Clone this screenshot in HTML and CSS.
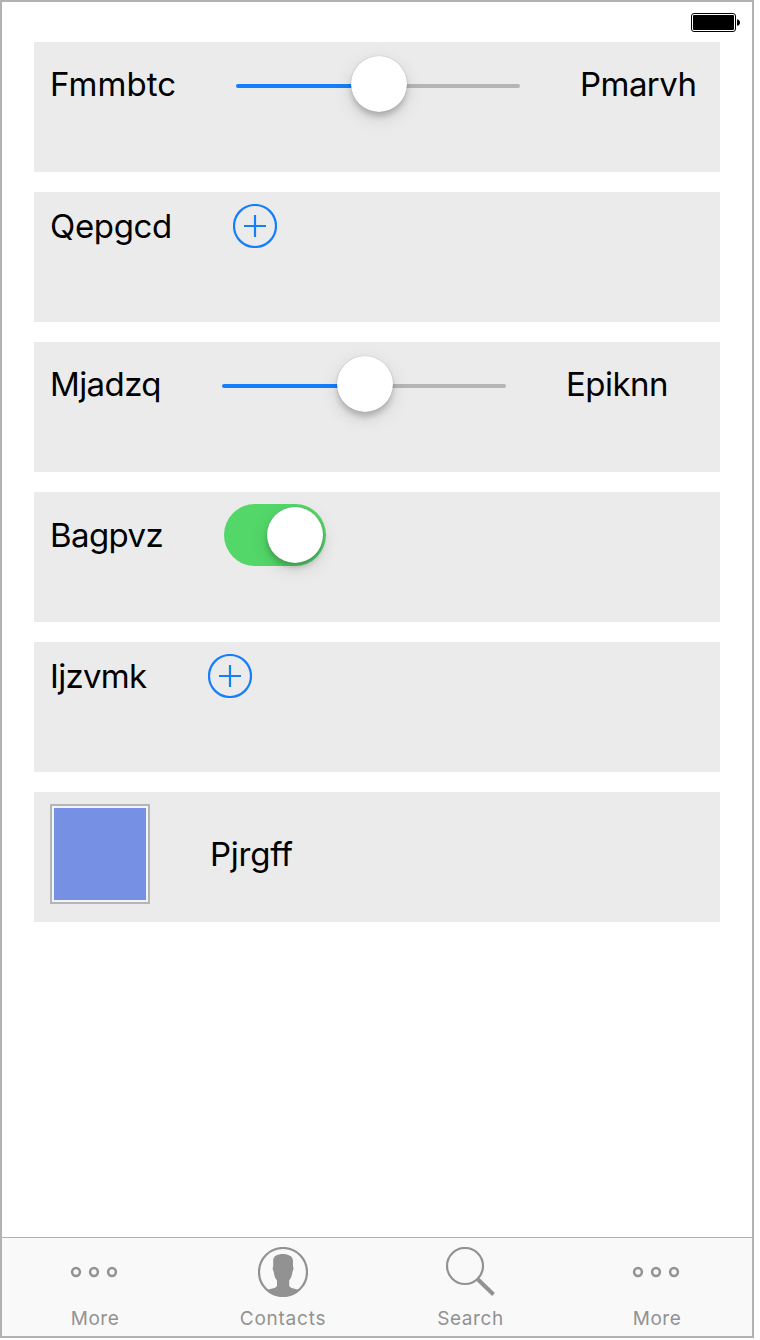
FILE: index.html
```
<!DOCTYPE html>
<html lang="en">
<head>
<meta charset="utf-8">
<title>Controls</title>
<link rel="stylesheet" href="styles.css">
</head>
<body>
<div class="phone">
  <header class="status">
    <svg class="battery" width="50" height="20" viewBox="0 0 50 20"><rect x=".5" y=".5" width="44" height="18" rx="2.5" fill="#fff" stroke="#000"/><rect x="2" y="2" width="41" height="15" rx="1"/><path d="M46 6.200c4 .4 4 6.200 0 6.600z"/></svg>
  </header>
  <main class="list">
    <section class="card">
      <div class="row slider-row"><span class="label l1">Fmmbtc</span><div class="slider"><div class="knob"></div></div><span class="label l2">Pmarvh</span></div>
    </section>
    <section class="card">
      <div class="row"><span class="label l3">Qepgcd</span><svg class="plus" width="44" height="44" viewBox="0 0 44 44"><circle cx="22" cy="22" r="21"/><path d="M22 11v22M11 22h22"/></svg></div>
    </section>
    <section class="card">
      <div class="row slider-row"><span class="label l4">Mjadzq</span><div class="slider"><div class="knob"></div></div><span class="label l5">Epiknn</span></div>
    </section>
    <section class="card">
      <div class="row"><span class="label l6">Bagpvz</span><div class="switch"><div class="knob"></div></div></div>
    </section>
    <section class="card">
      <div class="row"><span class="label l7">Ijzvmk</span><svg class="plus" width="44" height="44" viewBox="0 0 44 44"><circle cx="22" cy="22" r="21"/><path d="M22 11v22M11 22h22"/></svg></div>
    </section>
    <section class="card">
      <div class="row"><div class="swatch"></div><span class="label l8">Pjrgff</span></div>
    </section>
  </main>
  <nav class="tabs">
    <a class="tab"><svg width="50" height="50" viewBox="0 0 50 50"><g fill="none" stroke="#929292" stroke-width="2.500"><circle cx="6" cy="25" r="3.900"/><circle cx="24" cy="25" r="3.900"/><circle cx="42" cy="25" r="3.900"/></g></svg><span class="t-more">More</span></a>
    <a class="tab"><svg width="50" height="50" viewBox="0 0 50 50"><circle cx="25" cy="25" r="24" fill="none" stroke="#929292" stroke-width="2.200"/><path fill="#929292" d="M25 7C30 7 35 9 35 14V20C36 20 35.500 23 34.500 24.500C34 29 33 31 31.200 33.500V38.500C31.500 41 36 41.500 41.500 43.200C37 47.500 31.500 49.500 25 49.500S13 47.500 8.500 43.200C14 41.500 18.800 41 19 38.500V33.500C17 31 16.200 29 15.700 24.500C14.700 23 14.200 20 15.200 20V13C15.500 9 19.500 7 25 7z"/></svg><span class="t-contacts">Contacts</span></a>
    <a class="tab"><svg width="50" height="50" viewBox="0 0 50 50"><g fill="none" stroke="#929292"><circle cx="20" cy="19" r="18" stroke-width="2.200"/><path d="M33 32.500L48.500 47.500" stroke-width="4"/></g></svg><span class="t-search">Search</span></a>
    <a class="tab"><svg width="50" height="50" viewBox="0 0 50 50"><g fill="none" stroke="#929292" stroke-width="2.500"><circle cx="6" cy="25" r="3.900"/><circle cx="24" cy="25" r="3.900"/><circle cx="42" cy="25" r="3.900"/></g></svg><span class="t-more">More</span></a>
  </nav>
</div>
</body>
</html>
```
FILE: styles.css
```
* { box-sizing: border-box; }
body { margin: 0; background: #fff; font-family: Inter, "Liberation Sans", sans-serif; }
.phone { width: 754px; height: 1338px; border: 2px solid #b2b2b2; display: flex; flex-direction: column; }
.status { height: 40px; padding: 11px 11px 0 0; display: flex; justify-content: flex-end; align-items: flex-start; }
.battery { display: block; }
.list { flex: 1; padding: 0 32px; display: flex; flex-direction: column; gap: 20px; }
.card { height: 130px; background: #ebebeb; padding: 12px 16px; }
.row { display: flex; align-items: center; gap: 60px; }
.slider-row { height: 60px; }
.label { font-size: 33px; line-height: 40px; color: #000; white-space: nowrap; }
.l1 { width: 126px; letter-spacing: 0.05px; }
.l2 { letter-spacing: -0.55px; }
.l3 { width: 123px; letter-spacing: -0.35px; }
.l4 { width: 112px; letter-spacing: -0.6px; }
.l5 { letter-spacing: -0.55px; }
.l6 { width: 114px; letter-spacing: -0.6px; }
.l7 { width: 98px; letter-spacing: -0.7px; }
.l8 { letter-spacing: -0.25px; }
.slider { width: 284px; height: 4px; margin-top: 4px; border-radius: 2px; background: linear-gradient(to right, #147efb 50%, #b5b5b5 50%); display: flex; align-items: center; justify-content: center; }
.knob { width: 56px; height: 56px; flex: none; border-radius: 50%; background: #fff; box-shadow: 0 0 1px rgba(0,0,0,.3), 0 5px 5px rgba(0,0,0,.16), 0 6px 18px rgba(0,0,0,.13); }
.slider .knob { margin: 0 0 4px 2px; }
.plus { display: block; fill: none; stroke: #147efb; stroke-width: 2.2; }
.switch { width: 102px; height: 62px; border-radius: 31px; padding: 3px; background: #53d769; display: flex; justify-content: flex-end; }
.swatch { width: 100px; height: 100px; border: 2px solid #b5b5b5; padding: 2px; background: #7690e3 content-box; box-shadow: inset 0 0 0 2px #f2f4fc; }
.tabs { height: 99px; border-top: 1px solid #b2b2b2; background: #f9f9f9; display: grid; grid-template-columns: 186px 190px 184px 190px; }
.tab { display: flex; flex-direction: column; align-items: center; padding-top: 9px; color: #929292; font-size: 19px; line-height: 24px; }
.tab svg { display: block; margin-bottom: 10px; }
.t-more { letter-spacing: 0.5px; }
.t-contacts { letter-spacing: 0.75px; }
.t-search { letter-spacing: 0.6px; margin-left: 1px; }
```
